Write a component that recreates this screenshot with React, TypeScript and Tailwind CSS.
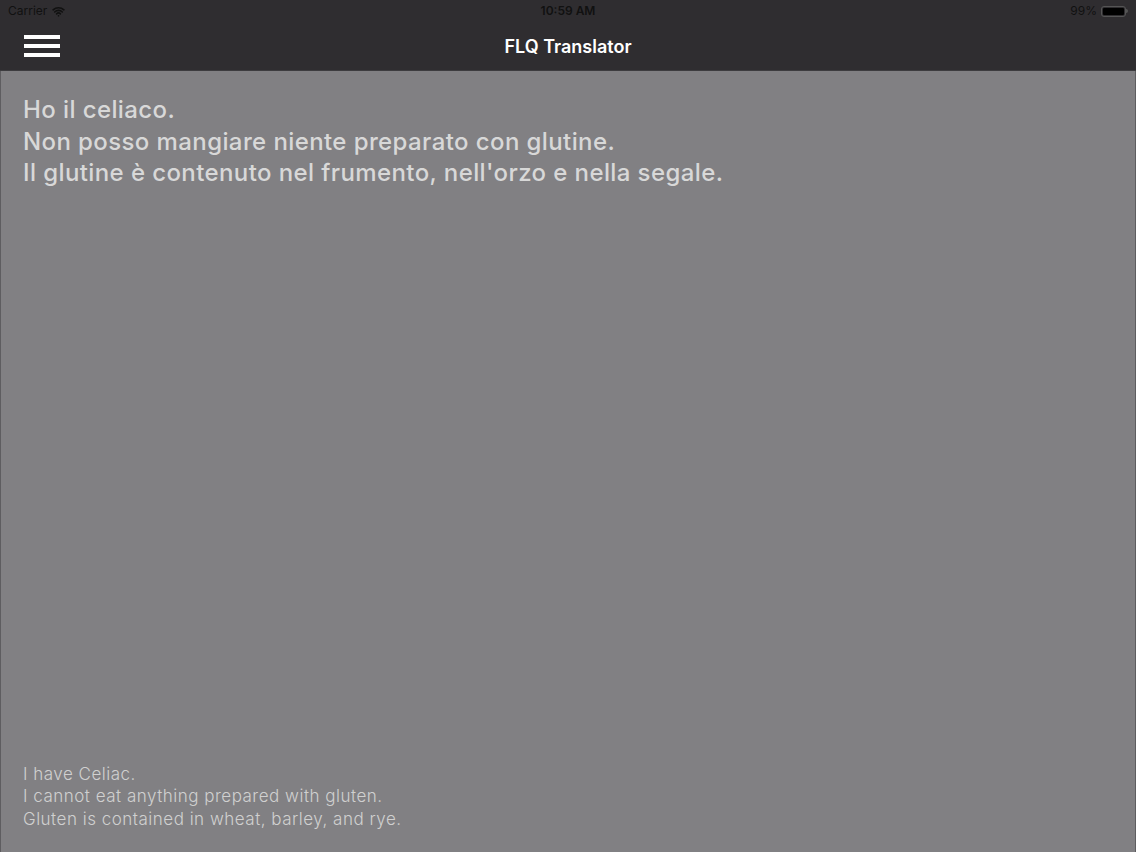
import { Wifi } from 'lucide-react'

const italian = [
    'Ho il celiaco.',
    'Non posso mangiare niente preparato con glutine.',
    "Il glutine è contenuto nel frumento, nell'orzo e nella segale.",
]

const english = [
    'I have Celiac.',
    'I cannot eat anything prepared with gluten.',
    'Gluten is contained in wheat, barley, and rye.',
]

function StatusBar() {
    return (
        <div className="relative flex h-[22px] items-center justify-between px-[8px] text-[12px] text-[#111]">
            <div className="flex items-center gap-[5px]">
                <span>Carrier</span>
                <Wifi className="h-[13px] w-[13px]" strokeWidth={3} />
            </div>
            <span className="absolute left-1/2 -translate-x-1/2 font-semibold">10:59 AM</span>
            <div className="flex items-center gap-[4px]">
                <span>99%</span>
                <div className="flex items-center">
                    <div className="h-[11px] w-[25px] rounded-[3px] border border-[#555] p-[1px]">
                        <div className="h-full w-full rounded-[1px] bg-black" />
                    </div>
                    <div className="h-[4px] w-[2px] rounded-r-sm bg-[#555]" />
                </div>
            </div>
        </div>
    )
}

function NavBar() {
    return (
        <div className="relative flex h-[48px] items-center px-[24px]">
            <button className="flex w-[36px] flex-col gap-[5px]">
                <span className="h-[4px] w-full bg-white" />
                <span className="h-[4px] w-full bg-white" />
                <span className="h-[4px] w-full bg-white" />
            </button>
            <h1 className="absolute left-1/2 top-[11px] -translate-x-1/2 text-[18px] font-semibold text-white">
                FLQ Translator
            </h1>
        </div>
    )
}

export default function App() {
    return (
        <div className="flex h-[852px] w-[1136px] flex-col bg-[#818083] font-['Inter','Roboto',sans-serif]">
            <header className="border-b border-[#3d3c3f] bg-[#2f2d30]">
                <StatusBar />
                <NavBar />
            </header>

            <main className="flex flex-1 flex-col justify-between border-x border-[#5e5d60] px-[22px] pb-[22px] pt-[23px]">
                <div className="text-[24px] font-medium leading-[31.5px] tracking-[0.4px] text-[#d8d8d8]">
                    {italian.map((line) => (
                        <p key={line}>{line}</p>
                    ))}
                </div>
                <div className="text-[17px] font-light leading-[22.5px] tracking-[0.5px] text-[#d0d0d0]">
                    {english.map((line) => (
                        <p key={line}>{line}</p>
                    ))}
                </div>
            </main>
        </div>
    )
}
